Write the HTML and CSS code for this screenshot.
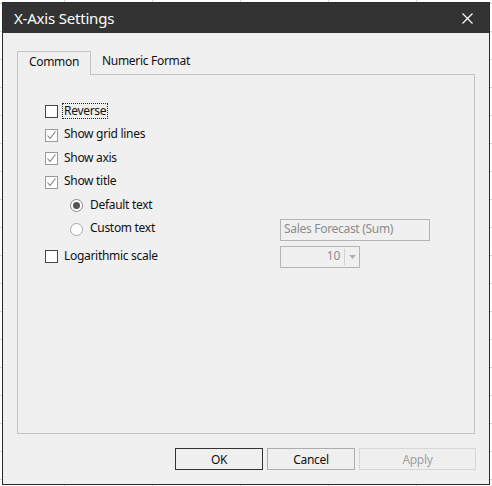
FILE: index.html
```html
<!DOCTYPE html>
<html lang="en">
<head>
    <meta charset="UTF-8">
    <title>X-Axis Settings</title>
    <link rel="stylesheet" href="styles.css">
</head>
<body>
    <div class="dialog">
        <!-- Title bar -->
        <div class="titlebar">
            <span class="title">X-Axis Settings</span>
            <span class="close">
                <svg width="11" height="11" viewBox="0 0 11 11">
                    <path d="M0.5 0.5 L10.5 10.5 M10.5 0.5 L0.5 10.5" stroke="#fff" stroke-width="1.2" fill="none"/>
                </svg>
            </span>
        </div>

        <div class="dialog-body">
            <!-- Tabs -->
            <div class="tabs">
                <div class="tab active">Common</div>
                <div class="tab">Numeric Format</div>
            </div>

            <div class="panel">
                <div class="options">
                    <div class="row">
                        <div class="opt">
                            <span class="checkbox dark"></span>
                            <span class="label focus">Reverse</span>
                        </div>
                    </div>
                    <div class="row">
                        <div class="opt">
                            <span class="checkbox checked">
                                <svg width="11" height="11" viewBox="0 0 11 11"><path d="M1.5 5.5 L4 8.5 L9.5 1.5" stroke="#7a7a7a" stroke-width="1.1" fill="none"/></svg>
                            </span>
                            <span class="label">Show grid lines</span>
                        </div>
                    </div>
                    <div class="row">
                        <div class="opt">
                            <span class="checkbox checked">
                                <svg width="11" height="11" viewBox="0 0 11 11"><path d="M1.5 5.5 L4 8.5 L9.5 1.5" stroke="#7a7a7a" stroke-width="1.1" fill="none"/></svg>
                            </span>
                            <span class="label">Show axis</span>
                        </div>
                    </div>
                    <div class="row">
                        <div class="opt">
                            <span class="checkbox checked">
                                <svg width="11" height="11" viewBox="0 0 11 11"><path d="M1.5 5.5 L4 8.5 L9.5 1.5" stroke="#7a7a7a" stroke-width="1.1" fill="none"/></svg>
                            </span>
                            <span class="label">Show title</span>
                        </div>
                    </div>
                    <div class="row">
                        <div class="opt sub">
                            <span class="radio selected"><span class="dot"></span></span>
                            <span class="label">Default text</span>
                        </div>
                    </div>
                    <div class="row">
                        <div class="opt sub">
                            <span class="radio"></span>
                            <span class="label">Custom text</span>
                        </div>
                        <div class="textfield">Sales Forecast (Sum)</div>
                    </div>
                    <div class="row log-row">
                        <div class="opt">
                            <span class="checkbox dark"></span>
                            <span class="label">Logarithmic scale</span>
                        </div>
                        <div class="combo">
                            <span class="combo-value">10</span>
                            <span class="combo-arrow">
                                <svg width="7" height="4" viewBox="0 0 7 4"><path d="M0 0 L7 0 L3.5 4 Z" fill="#b0b0b0"/></svg>
                            </span>
                        </div>
                    </div>
                </div>
            </div>

            <!-- Dialog buttons -->
            <div class="buttons">
                <button class="btn default">OK</button>
                <button class="btn">Cancel</button>
                <button class="btn wide disabled">Apply</button>
            </div>
        </div>
    </div>
</body>
</html>
```

FILE: styles.css
```css
/* Basic reset */
* {
    margin: 0;
    padding: 0;
    box-sizing: border-box;
}

/* Spreadsheet grid behind the dialog */
body {
    font-family: "Noto Sans", "Open Sans", sans-serif;
    font-size: 12px;
    letter-spacing: -0.3px;
    color: #111;
    width: 492px;
    height: 486px;
    overflow: hidden;
    background-color: #fff;
    background-image:
        linear-gradient(to right, #d4d4d4 1px, transparent 1px),
        linear-gradient(to bottom, #d4d4d4 1px, transparent 1px);
    background-size: 88px 28px;
    background-position: 64px 3px;
}

.dialog {
    width: 488px;
    height: 483px;
    margin: 2px 0 0 2px;
    border: 1px solid #2b2b2b;
    background-color: #f0f0f0;
}

.titlebar {
    height: 30px;
    background-color: #333;
    display: flex;
    align-items: center;
    justify-content: space-between;
    padding: 0 16px 0 11px;
}

.title {
    color: #fff;
    font-size: 15px;
    letter-spacing: -0.2px;
}

.close {
    display: flex;
    margin-top: 1px;
}

.dialog-body {
    padding: 18px 12px 0 14px;
}

/* Tabs */
.tabs {
    display: flex;
    height: 23px;
}

.tab {
    height: 23px;
    line-height: 20px;
    padding: 0 11px;
}

.tab.active {
    width: 74px;
    text-align: center;
    padding: 0;
    border: 1px solid #c4c4c4;
    border-bottom: none;
    background-color: #f0f0f0;
    height: 24px;
    position: relative;
    z-index: 1;
}

.panel {
    width: 458px;
    height: 360px;
    border: 1px solid #c4c4c4;
}

.options {
    padding: 25px 0 0 27px;
}

.row {
    display: flex;
    align-items: center;
    height: 23.5px;
}

.log-row {
    margin-top: 4px;
}

.opt {
    width: 235px;
    display: flex;
    align-items: center;
}

.opt.sub {
    padding-left: 25px;
}

.label {
    margin-left: 4px;
    padding: 0 1px;
    line-height: 14px;
    border: 1px solid transparent;
    position: relative;
    top: -1px;
}

.label.focus {
    border: 1px dotted #222;
}

/* Check boxes and radios */
.checkbox {
    width: 13px;
    height: 13px;
    border: 1px solid #9a9a9a;
    background-color: #fff;
    display: flex;
    align-items: center;
    justify-content: center;
}

.checkbox.dark {
    border-color: #444;
}

.radio {
    width: 13px;
    height: 13px;
    border: 1px solid #a8a8a8;
    border-radius: 50%;
    background-color: #fff;
    display: flex;
    align-items: center;
    justify-content: center;
    margin-right: 1px;
}

.radio.selected {
    border-color: #8a8a8a;
}

.dot {
    width: 7px;
    height: 7px;
    border-radius: 50%;
    background-color: #555;
}

/* Disabled inputs */
.textfield {
    width: 150px;
    height: 22px;
    margin-top: 1px;
    border: 1px solid #b4b4b4;
    color: #8c8c8c;
    padding-left: 3px;
    line-height: 18px;
}

.combo {
    width: 80px;
    height: 22px;
    border: 1px solid #b4b4b4;
    display: flex;
    color: #8c8c8c;
}

.combo-value {
    flex: 1;
    text-align: right;
    padding-right: 4px;
    line-height: 18px;
}

.combo-arrow {
    width: 15px;
    border-left: 1px solid #d0d0d0;
    margin: 2px 0;
    display: flex;
    align-items: center;
    justify-content: center;
}

/* Buttons */
.buttons {
    display: flex;
    justify-content: flex-end;
    gap: 4px;
    margin-top: 14px;
    padding-right: 1px;
}

.btn {
    width: 88px;
    height: 22px;
    font-family: inherit;
    font-size: 12px;
    letter-spacing: -0.3px;
    color: #111;
    background-color: #efefef;
    border: 1px solid #adadad;
}

.btn.default {
    border-color: #333;
}

.btn.wide {
    width: 117px;
}

.btn.disabled {
    color: #a0a0a0;
    border-color: #d6d6d6;
}
```
